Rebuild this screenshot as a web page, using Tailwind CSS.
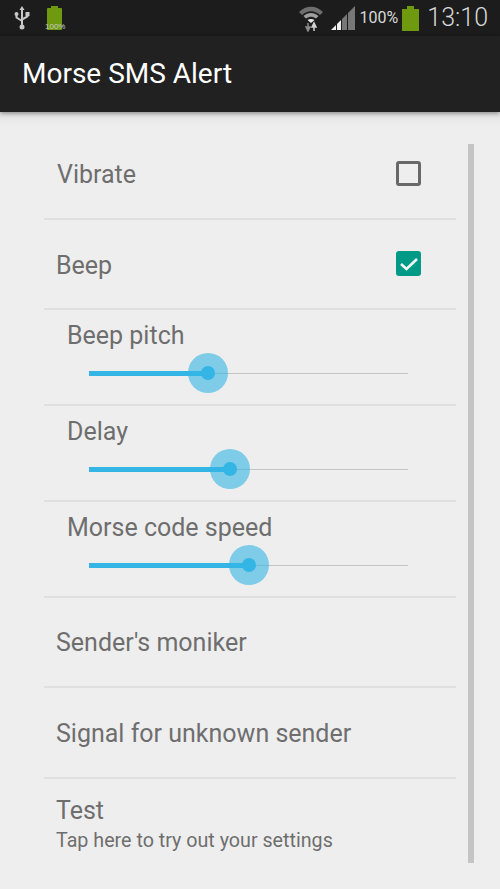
<!DOCTYPE html>
<html lang="en">
<head>
    <meta charset="UTF-8">
    <meta name="viewport" content="width=device-width, initial-scale=1.0">
    <title>Morse SMS Alert</title>
    <script src="https://cdn.jsdelivr.net/npm/@tailwindcss/browser@4"></script>
</head>
<body class="bg-[#eeeeee] font-['Roboto',sans-serif] text-[#6e6e6e]">
<div class="w-[500px] h-[889px] overflow-hidden relative flex flex-col">

    <!-- Status bar -->
    <div class="h-[36px] bg-[#1c1c1c] flex items-center shrink-0">
        <svg class="ml-[14px] w-[16px] h-[26px]" viewBox="0 0 16 26" fill="none" stroke="#c8c8c8" stroke-width="2">
            <path d="M8 3V21M2.500 9V12.500L8 16M13.500 9V11.500L8 14.500"/>
            <circle cx="8" cy="22" r="2.500" fill="#c8c8c8" stroke="none"/>
            <circle cx="2.500" cy="9" r="2" fill="#c8c8c8" stroke="none"/>
            <rect x="11.500" y="7" width="4" height="4" fill="#c8c8c8" stroke="none"/>
            <path d="M5.500 5L8 1L10.500 5Z" fill="#c8c8c8" stroke="none"/>
        </svg>
        <div class="ml-[16px] w-[17px] h-[24px] relative">
            <div class="mx-auto w-[7px] h-[2px] bg-[#6f9a10]"></div>
            <div class="w-[15px] h-[22px] mx-auto bg-[#6f9a10] rounded-[1px]"></div>
            <span class="absolute left-[-1px] bottom-[-1px] text-[8px] leading-[9px] text-[#c8c8c8] font-['Liberation_Sans',sans-serif]">100%</span>
        </div>
        <div class="ml-auto flex items-center">
            <svg class="w-[26px] h-[28px]" viewBox="0 0 26 28">
                <path d="M1 8C8 1 18 1 25 8L22 11C16 6 10 6 4 11Z" fill="#6e6e6e"/>
                <path d="M5.500 12C10 8 16 8 20.500 12L18 14.500C14.500 12 11.500 12 8 14.500Z" fill="#a0a0a0"/>
                <path d="M9.500 16C11.500 14.500 14.500 14.500 16.500 16L13 19Z" fill="#e8e8e8"/>
                <path d="M10 19V26M8 23L10 27L12 23Z" stroke="#8a8a8a" stroke-width="1.500" fill="#8a8a8a"/>
                <path d="M16 27V20M14 23L16 19L18 23Z" stroke="#d0d0d0" stroke-width="1.500" fill="#d0d0d0"/>
            </svg>
            <svg class="ml-[7px] w-[25px] h-[26px]" viewBox="0 0 25 26">
                <path d="M0 25L5 20V25Z" fill="#f0f0f0"/>
                <path d="M6 19L10 15V25H6Z" fill="#f0f0f0"/>
                <path d="M11 14L16 9V25H11Z" fill="#777777"/>
                <path d="M17 8L24 1V25H17Z" fill="#777777"/>
            </svg>
            <span class="ml-[4px] text-[16px] leading-[36px] text-[#d8d8d8]">100%</span>
            <div class="ml-[4px] w-[17px] h-[25px]">
                <div class="mx-auto w-[7px] h-[3px] bg-[#6f9a10]"></div>
                <div class="w-[17px] h-[22px] bg-[#6f9a10]"></div>
            </div>
            <span class="ml-[8px] mr-[12px] text-[25px] leading-[36px] font-light text-[#d8d8d8]">13:10</span>
        </div>
    </div>

    <!-- Action bar -->
    <div class="h-[76px] bg-[#212121] flex items-center pl-[22px] shrink-0 shadow-[0_1px_5px_rgba(0,0,0,0.45)] z-10">
        <h1 class="text-[28px] text-white">Morse SMS Alert</h1>
    </div>

    <!-- Settings list -->
    <div class="relative flex-1 bg-gradient-to-b from-[#e2e2e2] to-[#eeeeee] to-[14px]">
        <div class="absolute left-[468px] top-[32px] w-[6px] h-[719px] bg-[#c4c4c4]"></div>

        <div class="mx-[44px] w-[412px] pt-[17px]">
            <div class="h-[91px] border-b-2 border-[#dfdfdf] flex items-center justify-between pl-[13px] pr-[35px]">
                <span class="text-[25px] pt-[2px]">Vibrate</span>
                <div class="w-[25px] h-[25px] border-[3px] border-[#686868] rounded-[3px] bg-[#eeeeee]"></div>
            </div>

            <div class="h-[90px] border-b-2 border-[#dfdfdf] flex items-center justify-between pl-[12px] pr-[35px]">
                <span class="text-[25px] pt-[4px]">Beep</span>
                <div class="w-[25px] h-[25px] mb-[1px] rounded-[3px] bg-[#009a87] flex items-center justify-center">
                    <svg class="w-[18px] h-[14px]" viewBox="0 0 18 14" fill="none" stroke="#f4f4f4" stroke-width="2.600"><path d="M1 7L6.500 12L17 2"/></svg>
                </div>
            </div>

            <div class="h-[96px] border-b-2 border-[#dfdfdf] pl-[23px]">
                <div class="text-[25px] leading-[30px] pt-[11px]">Beep pitch</div>
                <div class="relative mt-[22px] ml-[22px] w-[319px] h-[1px] bg-[#c4c4c4]">
                    <div class="absolute left-0 top-[-2px] w-[119px] h-[5px] bg-[#33b5e5]"></div>
                    <div class="absolute left-[99px] top-[-20px] w-[40px] h-[40px] rounded-full bg-[#33b5e5]/60"></div>
                    <div class="absolute left-[112px] top-[-7px] w-[14px] h-[14px] rounded-full bg-[#33b5e5]"></div>
                </div>
            </div>

            <div class="h-[96px] border-b-2 border-[#dfdfdf] pl-[23px]">
                <div class="text-[25px] leading-[30px] pt-[11px]">Delay</div>
                <div class="relative mt-[22px] ml-[22px] w-[319px] h-[1px] bg-[#c4c4c4]">
                    <div class="absolute left-0 top-[-2px] w-[141px] h-[5px] bg-[#33b5e5]"></div>
                    <div class="absolute left-[121px] top-[-20px] w-[40px] h-[40px] rounded-full bg-[#33b5e5]/60"></div>
                    <div class="absolute left-[134px] top-[-7px] w-[14px] h-[14px] rounded-full bg-[#33b5e5]"></div>
                </div>
            </div>

            <div class="h-[96px] border-b-2 border-[#dfdfdf] pl-[23px]">
                <div class="text-[25px] leading-[30px] pt-[11px]">Morse code speed</div>
                <div class="relative mt-[22px] ml-[22px] w-[319px] h-[1px] bg-[#c4c4c4]">
                    <div class="absolute left-0 top-[-2px] w-[160px] h-[5px] bg-[#33b5e5]"></div>
                    <div class="absolute left-[140px] top-[-20px] w-[40px] h-[40px] rounded-full bg-[#33b5e5]/60"></div>
                    <div class="absolute left-[153px] top-[-7px] w-[14px] h-[14px] rounded-full bg-[#33b5e5]"></div>
                </div>
            </div>

            <div class="h-[90px] border-b-2 border-[#dfdfdf] flex items-center pl-[12px]">
                <span class="text-[25px] pt-[2px]">Sender's moniker</span>
            </div>

            <div class="h-[91px] border-b-2 border-[#dfdfdf] flex items-center pl-[12px]">
                <span class="text-[25px] pt-[2px]">Signal for unknown sender</span>
            </div>

            <div class="pl-[12px] pt-[17px]">
                <div class="text-[25px] leading-[30px]">Test</div>
                <div class="text-[19.7px] leading-[24px] mt-[3px]">Tap here to try out your settings</div>
            </div>
        </div>
    </div>
</div>
</body>
</html>
